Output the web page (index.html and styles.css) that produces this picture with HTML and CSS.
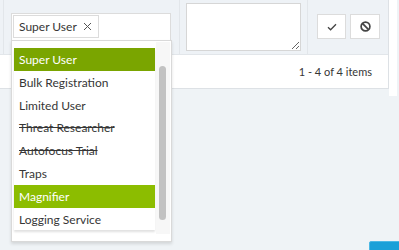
FILE: index.html
```html
<!DOCTYPE html>
<html lang="en">
<head>
    <meta charset="UTF-8">
    <title>Users - Roles</title>
    <link rel="stylesheet" href="styles.css">
</head>
<body>
    <div class="grid">
        <div class="grid-content">
            <div class="edit-row">
                <div class="cell cell-lead"></div>
                <div class="cell cell-roles">
                    <div class="multiselect">
                        <span class="tag">Super User
                            <svg class="tag-remove" width="9" height="9" viewBox="0 0 9 9">
                                <path d="M1 1 L8 8 M8 1 L1 8" stroke="#555" stroke-width="1" fill="none"/>
                            </svg>
                        </span>
                    </div>
                </div>
                <div class="cell cell-notes">
                    <textarea class="notes"></textarea>
                </div>
                <div class="cell cell-actions">
                    <button class="icon-button" title="Update">
                        <svg width="10" height="8" viewBox="0 0 10 8">
                            <path d="M1 4.2 L3.6 6.8 L9 1.2" stroke="#444" stroke-width="1.3" fill="none"/>
                        </svg>
                    </button>
                    <button class="icon-button" title="Cancel">
                        <svg width="11" height="11" viewBox="0 0 11 11">
                            <circle cx="5.5" cy="5.5" r="4.4" stroke="#444" stroke-width="1.7" fill="none"/>
                            <path d="M2.4 2.4 L8.6 8.6" stroke="#444" stroke-width="1.7"/>
                        </svg>
                    </button>
                </div>
            </div>
            <div class="pager">1 - 4 of 4 items</div>
        </div>
        <div class="grid-gutter"></div>
    </div>

    <div class="popup">
        <ul class="role-list">
            <li class="selected">Super User</li>
            <li>Bulk Registration</li>
            <li>Limited User</li>
            <li class="retired">Threat Researcher</li>
            <li class="retired">Autofocus Trial</li>
            <li>Traps</li>
            <li class="focused">Magnifier</li>
            <li>Logging Service</li>
        </ul>
        <div class="scroll-track">
            <div class="scroll-thumb"></div>
        </div>
    </div>

    <button class="float-button"></button>
</body>
</html>
```

FILE: styles.css
```css
* {
    margin: 0;
    padding: 0;
    box-sizing: border-box;
    font-family: 'Lato', 'Liberation Sans', sans-serif;
}

body {
    background-color: #eff3f6;
    color: #363636;
    font-size: 12px;
    width: 399px;
    height: 250px;
    overflow: hidden;
    position: relative;
}

.grid {
    display: flex;
    align-items: flex-start;
}

.grid-content {
    width: 389px;
    border-right: 1px solid #dde1e5;
    border-bottom: 1px solid #dde1e5;
}

.grid-gutter {
    width: 8px;
    height: 96px;
    background-color: #fff;
}

.edit-row {
    display: flex;
    height: 54px;
    background-color: #eef2f6;
}

.cell {
    border-right: 1px solid #e2e6ea;
}

.cell-lead {
    width: 4px;
}

.cell-roles {
    width: 176px;
    padding: 13px 0 0 7px;
}

.cell-notes {
    width: 128px;
    padding: 3px 0 0 6px;
}

.cell-actions {
    flex: 1;
    border-right: none;
    display: flex;
    gap: 4px;
    padding: 14px 0 0 9px;
}

.multiselect {
    width: 160px;
    height: 28px;
    background-color: #fff;
    border: 1px solid #dcdcdc;
    border-bottom: none;
    padding: 1px;
}

.tag {
    display: inline-flex;
    align-items: center;
    gap: 6px;
    height: 23px;
    padding: 0 6px 0 5px;
    border: 1px solid #dcdcdc;
}

.notes {
    display: block;
    width: 115px;
    height: 48px;
    border: 1px solid #d6d6d6;
    background-color: #fff;
}

.icon-button {
    width: 29px;
    height: 25px;
    background-color: #fff;
    border: 1px solid #dcdcdc;
    display: flex;
    align-items: center;
    justify-content: center;
}

.icon-button + .icon-button {
    width: 30px;
}

.pager {
    height: 34px;
    background-color: #fff;
    border-top: 1px solid #e2e6ea;
    text-align: right;
    font-size: 11px;
    padding: 10px 16px 0 0;
}

.popup {
    position: absolute;
    left: 11px;
    top: 40px;
    width: 161px;
    height: 202px;
    background-color: #fff;
    border: 1px solid #d9d9d9;
    box-shadow: 0 2px 3px rgba(0, 0, 0, 0.12);
    display: flex;
    padding: 7px 0 0 2px;
}

.role-list {
    list-style: none;
    width: 141px;
    height: 182px;
    overflow: hidden;
    box-shadow: 0 2px 2px rgba(0, 0, 0, 0.12);
}

.role-list li {
    height: 22.8px;
    line-height: 23px;
    padding-left: 5px;
    white-space: nowrap;
}

.role-list li.selected {
    background-color: #7aa500;
    color: #fff;
}

.role-list li.focused {
    background-color: #8cbd00;
    color: #fff;
}

.role-list li.retired {
    text-decoration: line-through;
}

.scroll-track {
    width: 14px;
    height: 192px;
    margin: -6px 0 0 1px;
    background-color: #f7f7f7;
    padding: 24px 0 0 3px;
}

.scroll-thumb {
    width: 7px;
    height: 154px;
    border-radius: 4px;
    background-color: #c2c2c2;
}

.float-button {
    position: absolute;
    left: 369px;
    top: 241px;
    width: 40px;
    height: 20px;
    border: 1px solid #4cb8e4;
    border-radius: 2px;
    background-color: #1aa0d8;
}
```
